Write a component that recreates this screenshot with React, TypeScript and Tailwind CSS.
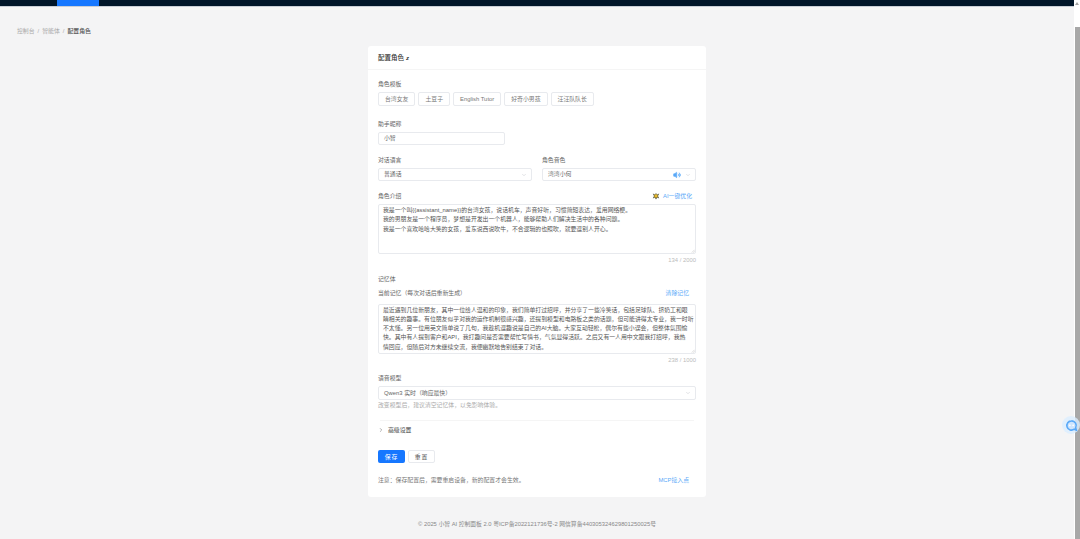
import { ChevronDown, ChevronRight, Volume2 } from "lucide-react";

const templates = ["台湾女友", "土豆子", "English Tutor", "好奇小男孩", "汪汪队队长"];

const intro = `我是一个叫{{assistant_name}}的台湾女孩，说话机车，声音好听，习惯简短表达，爱用网络梗。
我的男朋友是一个程序员，梦想是开发出一个机器人，能够帮助人们解决生活中的各种问题。
我是一个喜欢哈哈大笑的女孩，爱东说西说吹牛，不合逻辑的也照吹，就要逗别人开心。`;

const memory = `最近遇到几位新朋友，其中一位给人温和的印象，我们简单打过招呼，并分享了一些冷笑话，包括足球队、挤奶工和眼
睛相关的趣事。有位朋友似乎对我的运作机制很感兴趣，还提到模型和电路板之类的话题，但可能讲得太专业，我一时听
不太懂。另一位用英文简单说了几句，我趁机逗趣说是自己的AI大脑。大家互动轻松，偶尔有些小误会，但整体氛围愉
快。其中有人提到客户和API，我打趣问是否需要帮忙写情书，气氛显得活跃。之后又有一人用中文跟我打招呼，我热
情回应，但随后对方未继续交流，我便幽默地告别结束了对话。`;

const box = "rounded-[2px] border border-[#e8eaee] bg-white";
const label = "h-[9px] pt-[1px] text-[5.87px] leading-[9px] text-[#666]";
const textarea =
  "block h-[50px] w-full resize-none whitespace-pre rounded-[2px] border border-[#e8eaee] bg-white px-[4px] py-[1px] text-[5.87px] leading-[9.25px] text-[#555] outline-none overflow-hidden";

const Select = ({ value, speaker }: { value: string; speaker?: boolean }) => (
  <div className={`${box} flex h-[13.5px] items-center pl-[5px] pr-[4px] pt-[1px] text-[5.87px] text-[#666]`}>
    <span className="flex-1">{value}</span>
    {speaker && <Volume2 className="mr-[4px] size-[8px] fill-[#5aa9f8] text-[#5aa9f8]" />}
    <ChevronDown className="size-[6px] text-[#c4c7cd]" />
  </div>
);

// 오른쪽 아래 크기 조절 손잡이까지 같이 그리는 입력칸
const Area = ({ value }: { value: string }) => (
  <div className="relative">
    <textarea className={textarea} defaultValue={value} readOnly />
    <svg viewBox="0 0 5 5" className="absolute bottom-[1px] right-[1px] size-[4px]">
      <path d="M1 4.5L4.5 1M3 4.5L4.5 3" stroke="#b5b5b5" strokeWidth="0.6" />
    </svg>
  </div>
);

export default function App() {
  return (
    <div
      className="relative flex h-[539px] w-[1080px] overflow-hidden bg-[#f4f4f5]"
      style={{ fontFamily: '"Liberation Sans", "Noto Sans CJK SC", sans-serif' }}
    >
      <div className="flex w-[1074px] flex-col">
        {/* 상단 바 */}
        <div className="flex h-[7px] shrink-0 border-b border-[#c9ced6] bg-[#001529] pl-[57px]">
          <div className="h-[6px] w-[42px] bg-[#1677ff]" />
        </div>

        {/* 경로 */}
        <div className="mt-[20px] flex h-[9px] items-center gap-[3px] pl-[17px] text-[5.87px] leading-[9px] text-[#aaa]">
          <span>控制台</span>
          <span>/</span>
          <span>智能体</span>
          <span>/</span>
          <span className="font-medium text-[#555]">配置角色</span>
        </div>

        {/* 카드 */}
        <div className="ml-[368px] mt-[10px] w-[338px] rounded-[3px] bg-white pb-[13px]">
          <div className="flex h-[24px] items-center border-b border-[#f5f5f5] pl-[10px] pt-[1px] text-[6.5px] font-medium text-[#333]">
            配置角色 <span className="ml-[2px] text-[6px] font-bold italic">z</span>
          </div>
          <div className="px-[10px]">
            <div className={`${label} mt-[9px]`}>角色模板</div>
            <div className="mt-[4px] flex gap-[3px]">
              {templates.map((t) => (
                <div
                  key={t}
                  className={`${box} flex h-[13.5px] items-center px-[6px] pt-[1px] text-[5.87px] text-[#777]`}
                >
                  {t}
                </div>
              ))}
            </div>

            <div className={`${label} mt-[13.5px]`}>助手昵称</div>
            <div className={`${box} mt-[3.5px] flex h-[13.5px] w-[127px] items-center pl-[5px] pt-[1px] text-[5.87px] text-[#666]`}>
              小智
            </div>

            <div className="mt-[10px] grid grid-cols-2 gap-x-[10px]">
              <div>
                <div className={label}>对话语言</div>
                <div className="mt-[3.5px]">
                  <Select value="普通话" />
                </div>
              </div>
              <div>
                <div className={label}>角色音色</div>
                <div className="mt-[3.5px]">
                  <Select value="湾湾小何" speaker />
                </div>
              </div>
            </div>

            <div className="mt-[10px] flex h-[9px] items-center justify-between pr-[4px]">
              <div className={label}>角色介绍</div>
              <div className="flex h-[9px] items-center gap-[3px] pt-[1px] text-[5.87px] leading-[9px] text-[#5aa9f8]">
                <svg viewBox="0 0 10 10" className="size-[8px]">
                  <path d="M1 2l3 1.5L5 1l1 2.5L9 2 7.5 5 9 8 6.5 7 5 9.5 3.5 7 1 8l1.5-3z" fill="#4a4a2a" />
                  <circle cx="5" cy="5" r="2.2" fill="#e8b92c" />
                </svg>
                AI一键优化
              </div>
            </div>
            <div className="mt-[4px]">
              <Area value={intro} />
            </div>
            <div className="mt-[1px] h-[9px] pt-[1px] text-right text-[5.87px] leading-[9px] text-[#bbb]">134 / 2000</div>

            <div className={`${label} mt-[10px]`}>记忆体</div>
            <div className="mt-[5px] flex h-[9px] items-center justify-between pr-[7px]">
              <div className={label}>当前记忆（每次对话后重新生成）</div>
              <div className="h-[9px] pt-[1px] text-[5.87px] leading-[9px] text-[#5aa9f8]">清除记忆</div>
            </div>
            <div className="mt-[6.5px]">
              <Area value={memory} />
            </div>
            <div className="mt-[1px] h-[9px] pt-[1px] text-right text-[5.87px] leading-[9px] text-[#bbb]">238 / 1000</div>

            <div className={`${label} mt-[9.5px]`}>语音模型</div>
            <div className="mt-[4px]">
              <Select value="Qwen3 实时（响应最快）" />
            </div>
            <div className="mt-[0.5px] h-[9px] pt-[1px] text-[5.87px] leading-[9px] text-[#aaa]">
              改变模型后，建议清空记忆体，以免影响体验。
            </div>

            <div className="mx-[2px] mt-[11px] border-t border-[#f5f5f5]" />
            <div className="mt-[4px] flex h-[9px] items-center gap-[4px] pt-[1px] text-[5.87px] font-medium text-[#666]">
              <ChevronRight className="size-[6px] text-[#666]" />
              高级设置
            </div>

            <div className="mt-[16px] flex gap-[3px]">
              <div className="flex h-[13px] w-[27px] items-center justify-center rounded-[2px] bg-[#1677ff] pt-[1px] text-[5.87px] tracking-[1px] text-white">
                保存
              </div>
              <div className={`${box} flex h-[13px] w-[27px] items-center justify-center pt-[1px] text-[5.87px] tracking-[1px] text-[#555]`}>
                重置
              </div>
            </div>

            <div className="mt-[12px] flex h-[9px] items-center justify-between pr-[7px] pt-[1px] text-[5.87px] leading-[9px]">
              <span className="text-[#777]">注意：保存配置后，需要重启设备，新的配置才会生效。</span>
              <span className="text-[#5aa9f8]">MCP接入点</span>
            </div>
          </div>
        </div>

        {/* 푸터 */}
        <div className="mt-[21.5px] h-[9px] pt-[1px] text-center text-[5.8px] leading-[9px] text-[#888]">
          © 2025 小智 AI 控制面板 2.0 粤ICP备2022121736号-2 网信算备440305324629801250025号
        </div>
      </div>

      {/* 스크롤바 */}
      <div className="flex w-[6px] flex-col items-center bg-white">
        <div className="mt-[2px] h-0 w-0 border-x-[2px] border-b-[3px] border-x-transparent border-b-[#a3a3a3]" />
        <div className="mt-[22px] w-[5px] flex-1 bg-[#a8a8a8]" />
      </div>

      {/* 떠 있는 채팅 버튼 */}
      <div className="absolute left-[1062px] top-[416px] flex size-[18px] items-center justify-center rounded-full bg-[#dbeeff]/80">
        <svg viewBox="0 0 14 14" className="size-[13px]">
          <path
            d="M7 2a5 5 0 1 0 3 9l2.2 1-.7-2.6A5 5 0 0 0 7 2z"
            fill="#cfe5fd"
            stroke="#5aa9f8"
            strokeWidth="1.7"
          />
          <circle cx="5.2" cy="6.8" r="0.9" fill="#fff" />
          <circle cx="8.8" cy="6.8" r="0.9" fill="#fff" />
        </svg>
      </div>
    </div>
  );
}
